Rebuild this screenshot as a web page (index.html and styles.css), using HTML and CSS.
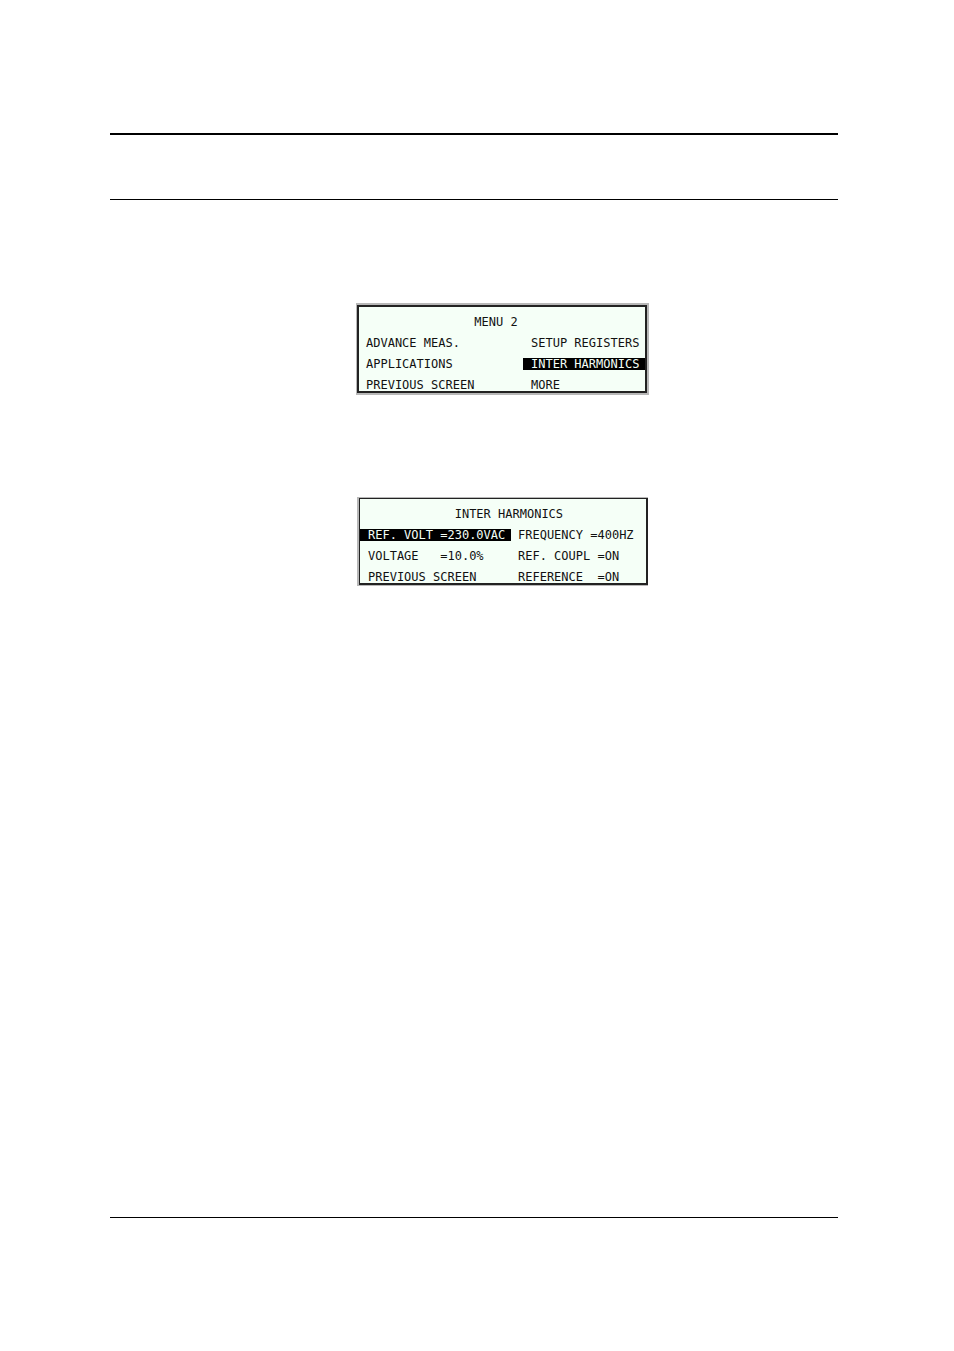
FILE: index.html
```html
<!DOCTYPE html>
<html lang="en">
<head>
<meta charset="utf-8">
<meta name="viewport" content="width=device-width, initial-scale=1">
<title>Inter Harmonics</title>
<link rel="stylesheet" href="styles.css">
</head>
<body>
<div class="page">
  <header class="page-header"></header>
  <main class="content">
    <section class="bezel bezel-menu">
      <div class="screen screen-menu">
        <h1 class="title">MENU 2</h1>
        <span class="item">ADVANCE MEAS.</span>
        <span class="item">SETUP REGISTERS</span>
        <span class="item">APPLICATIONS</span>
        <span class="item selected">INTER HARMONICS</span>
        <span class="item">PREVIOUS SCREEN</span>
        <span class="item">MORE</span>
      </div>
    </section>
    <section class="bezel bezel-harmonics">
      <div class="screen screen-harmonics">
        <h2 class="title">INTER HARMONICS</h2>
        <span class="item selected">REF. VOLT =230.0VAC</span>
        <span class="item">FREQUENCY =400HZ</span>
        <span class="item">VOLTAGE   =10.0%</span>
        <span class="item">REF. COUPL =ON</span>
        <span class="item">PREVIOUS SCREEN</span>
        <span class="item">REFERENCE  =ON</span>
      </div>
    </section>
  </main>
  <footer class="page-footer"></footer>
</div>
</body>
</html>
```
FILE: styles.css
```css
* {
  box-sizing: border-box;
}

body {
  margin: 0;
  background: #fff;
}

.page {
  display: flex;
  flex-direction: column;
  min-height: 100vh;
  padding: 133px 116px 133px 110px;
}

.page-header {
  height: 67px;
  border-top: 2px solid #000;
  border-bottom: 1px solid #000;
}

.content {
  display: flex;
  flex: 1;
  flex-direction: column;
  align-items: flex-start;
  gap: 102px;
  padding: 103px 0 0 246px;
}

.page-footer {
  border-top: 1px solid #000;
}

.bezel {
  background: #b8b8b8;
}

.bezel-menu {
  padding: 2px 2px 2px 1px;
}

.bezel-harmonics {
  margin-left: 1px;
  padding: 1px 0 1px 2px;
}

.screen {
  display: grid;
  row-gap: 9px;
  padding-top: 9px;
  border: 2px solid #222;
  background: #f5fff7;
  color: #111;
  font: 12px/12px "DejaVu Sans Mono", monospace;
  white-space: pre;
}

.screen-menu {
  grid-template-columns: 164px 1fr;
  width: 290px;
}

.screen-harmonics {
  grid-template-columns: 151px 1fr;
  width: 289px;
  border-width: 1px 2px 2px 1px;
}

.title {
  grid-column: 1 / -1;
  margin: 0;
  font: inherit;
}

.screen-menu .title {
  padding-left: calc(7px + 15ch);
}

.screen-harmonics .title {
  padding-left: calc(8px + 12ch);
}

.item {
  padding-left: 8px;
}

.screen-menu .item:nth-child(even) {
  padding-left: 7px;
}

.screen-harmonics .item:nth-child(odd) {
  padding-left: 7px;
}

.selected {
  background: #000;
  color: #f5fff7;
}
</style>
```
